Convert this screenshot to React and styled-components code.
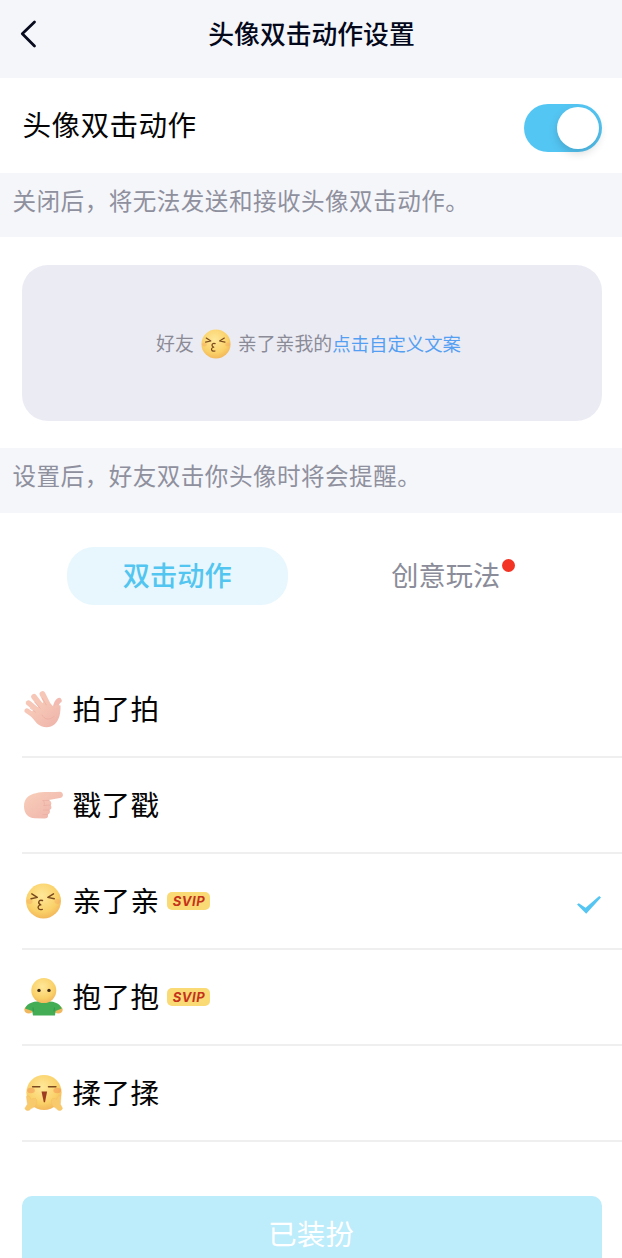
import { useState } from 'react';
import styled, { createGlobalStyle } from 'styled-components';

const GlobalStyle = createGlobalStyle`
  * {
    box-sizing: border-box;
  }
  body {
    margin: 0;
    background: #fff;
    overflow: hidden;
    font-family: 'Noto Sans CJK SC', sans-serif;
  }
  button {
    padding: 0;
    border: none;
    background: none;
    font-family: inherit;
    cursor: pointer;
  }
  svg {
    display: block;
    flex-shrink: 0;
  }
`;

const Page = styled.main`
  height: 1258px;
  display: flex;
  flex-direction: column;
  overflow: hidden;
  color: #050505;
`;

const Header = styled.header`
  height: 78px;
  flex-shrink: 0;
  display: grid;
  grid-template-columns: 60px 1fr 60px;
  align-items: center;
  padding: 0 0 13px;
  background: #f5f6fa;
  button {
    padding-left: 19px;
    padding-top: 3px;
  }
`;

const Title = styled.h1`
  margin: 0;
  padding: 1px 0 0 1px;
  text-align: center;
  font-size: 25.8px;
  font-weight: 500;
  line-height: 38px;
  color: #03081a;
`;

const SwitchRow = styled.section`
  height: 95px;
  flex-shrink: 0;
  display: flex;
  justify-content: space-between;
  align-items: center;
  padding: 4px 20px 0 22px;
`;

const Label = styled.span`
  padding-bottom: ${({ $lift }) => $lift || 0}px;
  padding-left: 0.5px;
  font-size: 28.6px;
  line-height: 40px;
  letter-spacing: 0.4px;
`;

const Switch = styled.button`
  width: 78px;
  height: 48px;
  padding: 0 3px;
  display: flex;
  align-items: center;
  justify-content: ${({ $on }) => ($on ? 'flex-end' : 'flex-start')};
  border-radius: 24px;
  background: ${({ $on }) => ($on ? '#54c6f4' : '#e3e4ea')};
`;

const Knob = styled.span`
  width: 42px;
  height: 42px;
  border-radius: 50%;
  background: #fff;
  box-shadow: 0 4px 10px rgba(0, 0, 0, 0.16);
`;

const Hint = styled.p`
  height: ${({ $height }) => $height}px;
  flex-shrink: 0;
  margin: 0;
  padding: 10px 12.5px;
  background: #f5f6fa;
  color: #8f909e;
  font-size: 23.6px;
  line-height: 34px;
  letter-spacing: 0.45px;
  white-space: nowrap;
`;

const PreviewArea = styled.section`
  flex-shrink: 0;
  padding: 28px 20px 27px 22px;
`;

const Preview = styled.div`
  height: 156px;
  padding: 0 7px 0 0;
  display: flex;
  justify-content: center;
  align-items: center;
  border-radius: 26px;
  background: #ebebf4;
  color: #8b8b97;
  font-size: 18.9px;
  line-height: 28px;
  white-space: nowrap;
  svg {
    margin: 1px 7px 0;
  }
  span,
  a {
    padding-bottom: 1px;
  }
  a {
    color: #559ff2;
    font-size: 18.4px;
  }
`;

const Tabs = styled.nav`
  flex-shrink: 0;
  display: flex;
  gap: 48px;
  padding: 34px 66px 57px 67px;
`;

const Tab = styled.button`
  width: 221px;
  height: 58px;
  padding-bottom: 5px;
  display: flex;
  justify-content: center;
  align-items: center;
  border-radius: 27px;
  background: ${({ $active }) => ($active ? '#e7f7fd' : 'transparent')};
  color: ${({ $active }) => ($active ? '#52c5f0' : '#8b8c99')};
  font-size: 27.2px;
  font-weight: ${({ $active }) => ($active ? 500 : 400)};
  line-height: 40px;
`;

const TabText = styled.span`
  position: relative;
`;

const Dot = styled.i`
  position: absolute;
  top: 5px;
  right: -15px;
  width: 13px;
  height: 13px;
  border-radius: 50%;
  background: #f33323;
`;

const List = styled.ul`
  flex-shrink: 0;
  margin: 0 0 54px 22px;
  padding: 0;
  list-style: none;
`;

const Item = styled.li`
  height: 96px;
  display: flex;
  align-items: center;
  border-bottom: 2px solid #efeff0;
  cursor: pointer;
`;

const ItemIcon = styled.span`
  width: 50px;
  padding-left: 1px;
`;

const Badge = styled.span`
  width: 43px;
  height: 18px;
  margin-left: 8px;
  display: flex;
  justify-content: center;
  align-items: center;
  border-radius: 5px;
  background: #f9da75;
  color: #c5321b;
  font: italic 700 13px/18px Inter, sans-serif;
  letter-spacing: 0.6px;
`;

const Tick = styled.span`
  margin: 8px 20px 0 auto;
`;

const SubmitButton = styled.button`
  height: 96px;
  flex-shrink: 0;
  margin: 0 20px 0 22px;
  padding: 0 2px 23px 0;
  border-radius: 10px;
  background: #bdecfb;
  color: #fff;
  font-size: 28.7px;
  line-height: 40px;
`;

const Gradients = () => (
  <svg width='0' height='0' style={{ position: 'absolute' }}>
    <defs>
      <radialGradient id='face' cx='0.45' cy='0.35' r='0.7'>
        <stop offset='0' stopColor='#ffe89a' />
        <stop offset='0.65' stopColor='#fad169' />
        <stop offset='1' stopColor='#f1b258' />
      </radialGradient>
      <linearGradient id='skin' x1='0' y1='0' x2='1' y2='1'>
        <stop offset='0' stopColor='#f9cfba' />
        <stop offset='1' stopColor='#eeb2aa' />
      </linearGradient>
    </defs>
  </svg>
);

const KissIcon = ({ size = 40 }) => (
  <svg
    width={size}
    height={size}
    viewBox={size < 40 ? '2 2 36 36' : '-0.5 0 40 40'}
  >
    <circle cx='20' cy='20' r='17.5' fill='url(#face)' />
    <g fill='#f49b62' opacity='0.3'>
      <ellipse cx='6' cy='20.5' rx='3' ry='2.4' />
      <ellipse cx='34' cy='20.5' rx='3' ry='2.4' />
    </g>
    <g
      fill='none'
      stroke='#79491d'
      strokeWidth='1.4'
      strokeLinecap='round'
      strokeLinejoin='round'
    >
      <path d='M8.3 12.8 13.8 16.4 7.5 17.7M30 12.8 24.3 16.4 30.8 17.7' />
      <path d='M19 19.5c-4-1.2-5.2 2.7-1.7 4.4-4.4.8-3.1 5.7 1.5 4.5' />
    </g>
  </svg>
);

const WaveIcon = () => (
  <svg width='40' height='40' viewBox='0 0 40 40'>
    <g stroke='#f6c6b7' strokeLinecap='round' fill='none'>
      <path d='M4 21.8 15 29.5' strokeWidth='5' />
      <path d='M5.6 14 19 25' strokeWidth='5.4' />
      <path d='M11 7.7 22 22' strokeWidth='5.6' />
      <path d='M19.5 5 26.5 19' strokeWidth='5.8' />
      <path
        d='M36 11.5C32.5 13.5 33.2 18 31.5 22'
        stroke='#f2bab0'
        strokeWidth='5.4'
      />
    </g>
    <path
      d='M6 25 12 20 23 11 28.5 15.5c1.4 2.2 3 2 4.3 0l4.7 1c.2 7-1 14.5-5.8 18.8C26.5 40 18.5 38.7 14 34.5Z'
      fill='url(#skin)'
    />
    <path
      d='m7.2 19.2 5.3 4M11.8 13.2l5.4 6M19.5 9.5l3.8 6.5M19 26c3 5 7 5.5 12 1.5'
      fill='none'
      stroke='#e9a89d'
      strokeWidth='0.8'
      opacity='0.75'
      strokeLinecap='round'
    />
  </svg>
);

const PokeIcon = () => (
  <svg width='40' height='40' viewBox='0 0 40 40'>
    <path
      d='M13 8.2C19 6.2 26 7.4 36.8 6.8c4 0 4.3 6 0 6.3L25.8 15c3 1.5 2.9 4 1.9 5.2 1.4 1.7.7 4.1-1.2 4.8 1 1.6.3 3.9-1.6 4.4.7 2.8-.8 4.2-3.8 4l-9.2-.2C4.8 33.2 1 28 1 21.5 1 13 6 9.4 13 8.2Z'
      fill='url(#skin)'
    />
    <path
      d='M20 15.5H26M21 20.5l6.3-.4M20.5 25.1h5.5M20 29.6l4.6-.2M20 15.5c1.6 1.5 1.8 3.5 1 5'
      fill='none'
      stroke='#e7a79e'
      strokeWidth='0.9'
      strokeLinecap='round'
      opacity='0.6'
    />
  </svg>
);

const HugIcon = () => (
  <svg width='40' height='40' viewBox='0 0 40 40'>
    <ellipse cx='5.8' cy='32.8' rx='4.5' ry='3.8' fill='#f0b75f' />
    <ellipse cx='35.2' cy='32.8' rx='4.5' ry='3.8' fill='#f0b75f' />
    <path
      d='M9 25.6C14 23.6 27 23.6 32 25.6c3.6 1 5.6 3.2 6.8 6L32.6 34l-.6 4.4H10L9.2 34 2 31.6c1.2-2.8 3.4-5 7-6Z'
      fill='#43ad55'
    />
    <path d='m10 30.5.4 4M31.4 30.5l-.4 4' stroke='#2f9548' strokeWidth='0.9' />
    <circle cx='20.8' cy='13.6' r='12.5' fill='url(#face)' />
    <circle cx='16' cy='13.4' r='1.7' fill='#3f2a16' />
    <circle cx='26' cy='13.4' r='1.7' fill='#3f2a16' />
  </svg>
);

const RubIcon = () => (
  <svg width='40' height='40' viewBox='0 0 40 40'>
    <circle cx='21' cy='19.5' r='17.6' fill='url(#face)' />
    <g fill='#f27f4b' opacity='0.4'>
      <ellipse cx='8' cy='17.5' rx='3.8' ry='2.8' />
      <ellipse cx='34.2' cy='17.5' rx='3.8' ry='2.8' />
    </g>
    <path
      d='M9.6 13.7h7.2M25.5 13.7h7.4'
      stroke='#7b4920'
      strokeWidth='1.5'
      strokeLinecap='round'
    />
    <path d='M18.5 18.5h5.6L22 29.3h-1.2Z' fill='#9d3c21' />
    <g fill='#f8ca6c' stroke='#f3bb5e' strokeWidth='0.4'>
      <path d='M3.4 23.4c2.6-1.6 3.8.7 4.4 2.8l4.4-1c2.8 1.5 1.9 6.5-1.2 8.9-2 1.5-3 1.2-3.9 2.5-1.7 1.8-4.8.8-5.2-1.4l2.5-4Z' />
      <path d='M38 23.4c-2.6-1.6-3.8.7-4.4 2.8l-3.6-1c-2.8 1.5-1.9 6.5 1.2 8.9 1.6 1.5 2.2 1.2 3.1 2.5 1.7 1.8 4.8.8 5.2-1.4l-2.1-4Z' />
    </g>
  </svg>
);

const actions = [
  { name: '拍了拍', Icon: WaveIcon },
  { name: '戳了戳', Icon: PokeIcon },
  { name: '亲了亲', Icon: KissIcon, svip: true },
  { name: '抱了抱', Icon: HugIcon, svip: true },
  { name: '揉了揉', Icon: RubIcon },
];

const App = () => {
  const [enabled, setEnabled] = useState(true);
  const [selected, setSelected] = useState('亲了亲');
  const [tab, setTab] = useState(0);

  return (
    <Page>
      <GlobalStyle />
      <Gradients />
      <Header>
        <button aria-label='返回'>
          <svg width='18' height='28' viewBox='0 0 18 28'>
            <path
              d='M15.5 2 3.3 13.8 15.5 26'
              fill='none'
              stroke='#070b1d'
              strokeWidth='2.8'
              strokeLinecap='round'
              strokeLinejoin='round'
            />
          </svg>
        </button>
        <Title>头像双击动作设置</Title>
      </Header>
      <SwitchRow>
        <Label $lift={8}>头像双击动作</Label>
        <Switch
          $on={enabled}
          role='switch'
          aria-checked={enabled}
          onClick={() => setEnabled(!enabled)}
        >
          <Knob />
        </Switch>
      </SwitchRow>
      <Hint $height={64}>关闭后，将无法发送和接收头像双击动作。</Hint>
      <PreviewArea>
        <Preview>
          <span>好友</span>
          <KissIcon size={30} />
          <span>亲了亲我的</span>
          <a>点击自定义文案</a>
        </Preview>
      </PreviewArea>
      <Hint $height={65}>设置后，好友双击你头像时将会提醒。</Hint>
      <Tabs>
        <Tab $active={tab === 0} onClick={() => setTab(0)}>
          <TabText>双击动作</TabText>
        </Tab>
        <Tab $active={tab === 1} onClick={() => setTab(1)}>
          <TabText>
            创意玩法
            <Dot />
          </TabText>
        </Tab>
      </Tabs>
      <List>
        {actions.map(({ name, Icon, svip }) => (
          <Item key={name} onClick={() => setSelected(name)}>
            <ItemIcon>
              <Icon />
            </ItemIcon>
            <Label $lift={2}>{name}</Label>
            {svip && <Badge>SVIP</Badge>}
            {selected === name && (
              <Tick>
                <svg width='26' height='20' viewBox='0 0 26 20'>
                  <path
                    d='M1 9.5 2.8 8.2 9.6 12.7 23.2 1.1 25 2.6 10.2 18.8Z'
                    fill='#55c5f2'
                  />
                </svg>
              </Tick>
            )}
          </Item>
        ))}
      </List>
      <SubmitButton>已装扮</SubmitButton>
    </Page>
  );
};

export default App;
